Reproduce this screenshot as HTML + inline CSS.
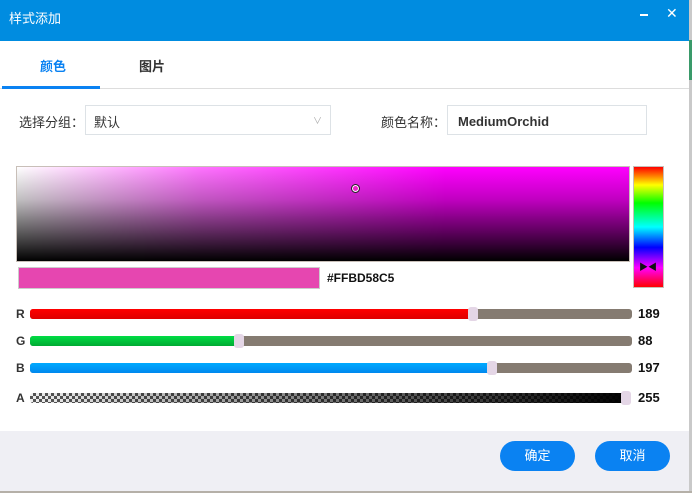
<!DOCTYPE html>
<html><head><meta charset="utf-8"><style>
*{margin:0;padding:0;box-sizing:border-box}
body{width:692px;height:493px;background:#fff;font-family:"Liberation Sans","Noto Sans CJK SC",sans-serif;position:relative;overflow:hidden}
.abs{position:absolute}
.title{left:0;top:0;width:689px;height:41px;background:#008ce0;color:#fff;font-size:13px}
.lbl{font-size:13px;color:#333}
.track{position:absolute;height:10px;border-radius:3px}
.thumb{position:absolute;width:10px;height:14px;background:#e4d6e6;border-radius:3px}
.num{position:absolute;font-size:13px;font-weight:bold;color:#111}
.let{position:absolute;font-size:12px;font-weight:bold;color:#333;left:16px}
.btn{position:absolute;top:441px;width:75px;height:30px;border-radius:15px;background:#0a82f2;color:#fff;font-size:13px;text-align:center;line-height:30px}
</style></head><body>
<div class="abs" style="left:689px;top:0;width:3px;height:493px;background:#c9c9c9"></div>
<div class="abs" style="left:689px;top:40px;width:3px;height:40px;background:#3a9a6a"></div>
<div class="abs title"><span style="position:absolute;left:9px;top:8px">样式添加</span>
<div style="position:absolute;left:640px;top:14px;width:8px;height:2px;background:#fff"></div>
<span style="position:absolute;left:666px;top:5px;font-size:14px">✕</span></div>
<div class="abs" style="left:0;top:88px;width:689px;height:1px;background:#ddd"></div>
<div class="abs" style="left:2px;top:86px;width:98px;height:3px;background:#0a82f2"></div>
<div class="abs" style="left:40px;top:56px;font-size:13px;font-weight:bold;color:#0a82f2">颜色</div>
<div class="abs" style="left:139px;top:56px;font-size:13px;font-weight:bold;color:#333">图片</div>
<div class="abs lbl" style="left:19px;top:112px">选择分组：</div>
<div class="abs" style="left:85px;top:105px;width:246px;height:30px;border:1px solid #dde2e6;font-size:13px;padding:6px 8px;color:#333">默认<span style="position:absolute;right:8px;top:8px;color:#aaa;font-size:9px">∨</span></div>
<div class="abs lbl" style="left:381px;top:112px">颜色名称：</div>
<div class="abs" style="left:447px;top:105px;width:200px;height:30px;border:1px solid #dde2e6;font-size:13px;font-weight:bold;padding:8px 10px;color:#333">MediumOrchid</div>
<div class="abs" style="left:16px;top:166px;width:614px;height:96px;border:1px solid #c8bfb8;background:linear-gradient(to bottom,rgba(0,0,0,0),rgba(0,0,0,.25) 35%,rgba(0,0,0,.7) 75%,#000),linear-gradient(to right,#fff,rgba(255,255,255,.45) 30%,rgba(255,255,255,0) 70%),#f0f;"></div>
<div class="abs" style="left:351px;top:184px;width:9px;height:9px;border:1.5px solid #222;border-radius:50%;background:#e2c;box-shadow:0 0 0 1px #fff inset"></div>
<div class="abs" style="left:633px;top:166px;width:31px;height:122px;border:1px solid #c8bfb8;background:linear-gradient(#f00,#ff0 15%,#0f0 30%,#0ff 50%,#00f 67%,#f0f 84%,#f00)"></div>
<div class="abs" style="left:639px;top:260px;font-size:9px;color:#111">▶◀</div>
<div class="abs" style="left:18px;top:267px;width:302px;height:22px;background:#e646b0;border:1px solid #ccc"></div>
<div class="abs" style="left:327px;top:271px;font-size:12px;font-weight:bold;color:#111">#FFBD58C5</div>
<div class="let" style="top:307px">R</div>
<div class="track" style="left:30px;top:309px;width:602px;background:#857b71"></div>
<div class="track" style="left:30px;top:309px;width:445px;background:linear-gradient(#f00,#d00)"></div>
<div class="thumb" style="left:468px;top:307px"></div>
<div class="num" style="left:638px;top:306px">189</div>
<div class="let" style="top:334px">G</div>
<div class="track" style="left:30px;top:336px;width:602px;background:#857b71"></div>
<div class="track" style="left:30px;top:336px;width:208px;background:linear-gradient(#0d4,#0a3)"></div>
<div class="thumb" style="left:234px;top:334px"></div>
<div class="num" style="left:638px;top:333px">88</div>
<div class="let" style="top:361px">B</div>
<div class="track" style="left:30px;top:363px;width:602px;background:#857b71"></div>
<div class="track" style="left:30px;top:363px;width:462px;background:linear-gradient(#0af,#08e)"></div>
<div class="thumb" style="left:487px;top:361px"></div>
<div class="num" style="left:638px;top:360px">197</div>
<div class="let" style="top:391px">A</div>
<div class="track" style="left:30px;top:393px;width:600px;background:linear-gradient(to right,rgba(0,0,0,0),#000),repeating-conic-gradient(#555 0 25%,#eee 0 50%) 0 0/6px 6px"></div>
<div class="thumb" style="left:621px;top:391px"></div>
<div class="num" style="left:638px;top:390px">255</div>
<div class="abs" style="left:0;top:431px;width:689px;height:62px;background:#efeff4"></div>
<div class="abs" style="left:0;top:491px;width:692px;height:2px;background:#b5b0a8"></div>
<div class="btn" style="left:500px">确定</div>
<div class="btn" style="left:595px">取消</div>
</body></html>
